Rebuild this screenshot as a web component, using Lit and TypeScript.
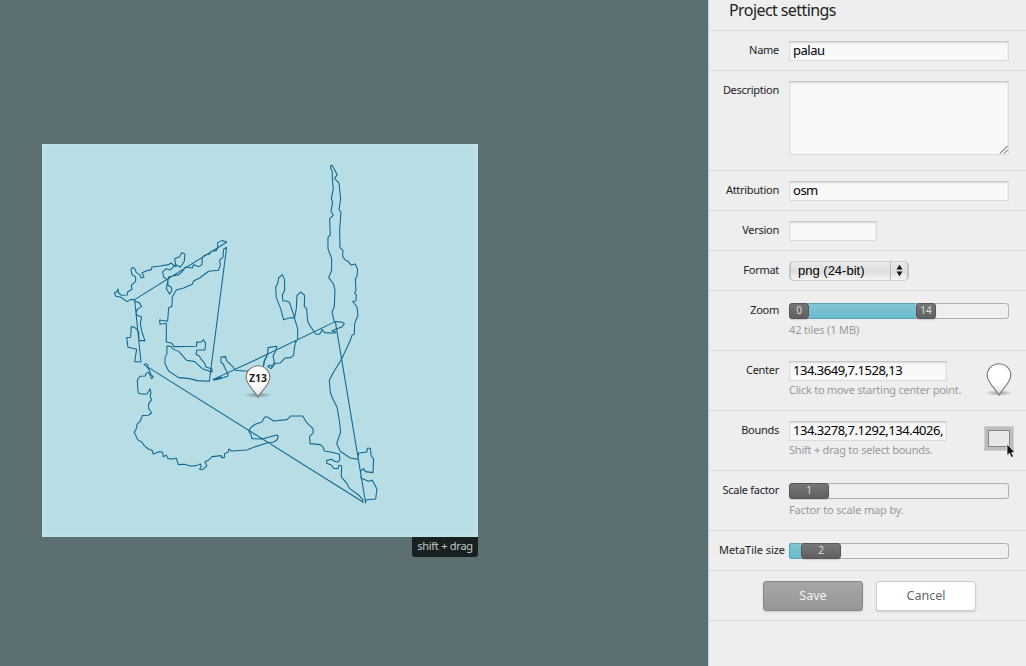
import { LitElement, html, svg, css, nothing } from "lit";
import { customElement, property } from "lit/decorators.js";

const pin = (label: string) => svg`
  <defs>
    <linearGradient id="pinfill" x1="0" y1="0" x2="0" y2="1">
      <stop offset="0" stop-color="#fff"/><stop offset=".6" stop-color="#fff"/><stop offset="1" stop-color="#ddd"/>
    </linearGradient>
    <radialGradient id="pinshade"><stop offset="0" stop-color="#000" stop-opacity=".35"/><stop offset="1" stop-color="#000" stop-opacity="0"/></radialGradient>
  </defs>
  <ellipse cx="14" cy="30" rx="14" ry="3" fill="url(#pinshade)"/>
  <path d="M14 32 C12 27.500 2.200 20 2.200 12.300 A11.800 11.500 0 0 1 25.800 12.300 C25.800 20 16 27.500 14 32Z"
    fill="url(#pinfill)" stroke="#777" stroke-width="1.100"/>
  ${label
    ? svg`<text x="14" y="17" text-anchor="middle" textLength="18" lengthAdjust="spacingAndGlyphs" font-family="Noto Sans, Open Sans, sans-serif" font-weight="700" font-size="11" fill="#222">${label}</text>`
    : nothing}`;

const coast: { x: number; y: number; d: string }[] = [
  {
    x: 100, y: 225,
    d: `M380,50 365,46 352,52 352,68 348,76 333,78 328,86 312,90 306,98 305,118 296,124 280,118 276,128 255,125 245,140 235,148 218,152 205,155 203,165 200,180 198,190 208,206 215,196 213,186 203,180 203,165 190,155 187,140 198,130 210,134 222,122 212,113 205,118 180,122 155,125 153,133 137,137 125,143 131,155 122,158 118,148 108,142 105,132 98,126 92,132 95,148 106,155 106,168 93,180 95,192 82,200 81,209 64,210 55,203 53,191 49,200 42,203 47,213 62,216 80,229 90,223 103,223 L380,50
    M212,113 L227,124 223,100 238,94 244,82 254,86 252,108 240,126 227,118
    M379,66 L370,72 368,96 358,104 360,120 354,135 325,138 298,158 280,167 276,177 250,188 228,194 216,215 215,243 205,248 202,288 178,284 179,297 198,294 198,350 215,354 221,364 289,363 289,350 301,351 310,343 313,350 316,352 314,374 290,374 287,387 297,392 304,404 312,412 317,425 335,431 335,440 306,430 283,409 259,405 236,379 216,370 213,363 200,362 200,385 194,397 194,415 205,437 235,457 268,460 290,466 327,468Z
    M103,223 L122,410 103,409 109,372 83,366 79,337 91,336 93,304 103,306 115,318 116,346 134,346 125,320 120,295 124,275 110,270 107,260 113,250 124,244 117,232 103,228`,
  },
  {
    x: 120, y: 350,
    d: `M728,455 L85,52 71,43 76,40 83,43 80,50 85,56 92,72 99,80 94,85 88,72 84,66 77,70 75,77 59,78 51,90 52,110 54,128 63,131 80,131 86,122 89,115 92,128 89,137 94,148 85,160 85,174 94,188 84,195 66,196 60,212 50,222 49,233 42,246 52,268 65,276 72,286 84,296 95,300 99,311 117,304 127,306 129,319 138,315 143,325 160,326 168,323 174,343 192,342 210,347 228,346 240,341 243,348 238,357 247,358 260,347 254,335 265,329 275,319 303,316 304,322 312,322 313,310 324,305 326,296 334,302 380,299 400,291 440,278 460,275 470,269 474,258 470,254 455,258 425,266 395,265 392,252 385,243
    M280,90 L300,85 323,77 323,70 312,50 310,42 302,36 302,20 316,19 318,30 338,50 345,60 372,62 412,62 428,54 432,32 440,18`,
  },
  {
    x: 240, y: 380,
    d: `M25,152 L33,140 45,132 65,125 73,110 82,110 100,122 140,118 152,107 187,107 200,128 218,145 219,158 208,168 209,190 240,193 248,200 252,212 270,215 297,221 299,238 293,245 283,243 273,237 259,241 259,249 273,254 280,264 293,265 296,255 304,257 303,290 320,310 328,325 356,345 367,357 368,368
    M300,213 L330,233 352,237 355,218 380,215 381,204 390,204 393,228 400,235 398,277 375,274 370,265 361,272 362,293 385,303 396,300 410,326 406,356 376,359 L376,368 285,-177`,
  },
  {
    x: 255, y: 260,
    d: `M-128,358 L0,299 240,184 262,186 267,190 260,200 242,206 230,212 242,215 238,219 208,217 200,207 198,215 192,222 182,222 165,198 157,183 154,145 147,138 148,105 136,95 125,106 123,145 118,172 102,126 93,122 83,122 81,105 88,90 88,58 81,43 70,53 67,70 61,80 63,112 76,145 85,178 100,173 117,172 127,205 127,235 120,250 117,265 115,285 106,292 90,293 75,308 60,309 47,325 37,318 46,314 51,321 57,305 53,287 60,275 65,258 38,262 37,282 28,300 25,315
    M-128,358 L-100,350`,
  },
  {
    x: 310, y: 150,
    d: `M72,84 L81,74 66,46 61,46 61,54 66,65 66,85 69,115 63,145 67,155 62,183 69,195 58,205 60,253 53,262 53,295 64,325 64,360 55,382 70,402 74,420 72,470 65,485 72,515
    M72,84 L86,98 91,145 86,178 92,186 88,240 89,292 98,300 97,318 105,330 112,332 122,344 135,341 142,358 140,377 135,387 137,420 133,429 138,434 137,452 127,453 140,470 143,495 133,520 132,552 125,555 120,570 110,592 92,630 70,665 57,690 60,725 65,740 80,770 87,810 91,845 79,880 90,903`,
  },
];

@customElement("value-slider")
class ValueSlider extends LitElement {
  @property({ type: Number }) fill = 0;
  @property({ type: Number }) handle = 20;
  @property() low = "";
  @property() value = "";
  static styles = css`
    :host { display: block; width: 220px; height: 16px; }
    .track { display: flex; box-sizing: border-box; height: 16px; border: 1px solid #b0b0b0; border-radius: 3px; background: #efefef; }
    .bar { box-sizing: border-box; height: 16px; margin-top: -1px; border: solid #5aa2b3; border-width: 1px 0; background: linear-gradient(#82c5d4, #68bbcf); }
    .bar.first { margin-left: -1px; border-left-width: 1px; border-radius: 3px 0 0 3px; }
    .knob { box-sizing: border-box; height: 16px; margin-top: -1px; border: 1px solid #565656; border-radius: 3px; background: linear-gradient(#777, #606060); color: #ddd; font: 10px/13px "Noto Sans", "Open Sans", sans-serif; text-align: center; box-shadow: 0 1px 1px #0002; }
    .knob.first { margin-left: -1px; }
  `;
  render() {
    return html`<div class="track">
      ${this.low ? html`<div class="knob first" style="width:${this.handle}px">${this.low}</div>` : nothing}
      ${this.fill ? html`<div class="bar ${this.low ? "" : "first"}" style="width:${this.fill}px"></div>` : nothing}
      <div class="knob ${this.low || this.fill ? "" : "first"}" style="width:${this.handle}px">${this.value}</div>
    </div>`;
  }
}

@customElement("app-root")
class AppRoot extends LitElement {
  static styles = css`
    :host { display: flex; width: 1026px; height: 666px; overflow: hidden; background: #5c6f72; font-family: "Noto Sans", "Open Sans", sans-serif; }
    .stage { width: 708px; box-sizing: border-box; padding: 144px 0 0 42px; }
    .map { position: relative; width: 436px; height: 393px; background: #b7dee5; box-shadow: inset 0 0 10px #c3e6ee; }
    .map > svg { display: block; }
    .marker { position: absolute; left: 202px; top: 221px; }
    .tip { box-sizing: border-box; width: 66px; height: 20px; margin-left: 370px; background: #192021; color: #c4c8c8; border-radius: 0 0 3px 3px; font-size: 11px; line-height: 18px; text-align: center; white-space: nowrap; letter-spacing: -0.25px; }
    .panel { width: 318px; box-sizing: border-box; border-left: 1px solid #ccc; background: #eee; color: #333; }
    h1 { box-sizing: border-box; height: 31px; margin: 0; padding-left: 20px; border-bottom: 1px solid #dcdcdc; font-size: 16px; font-weight: 400; line-height: 21px; letter-spacing: -0.58px; color: #222; }
    .row { display: flex; align-items: flex-start; box-sizing: border-box; height: 40px; border-bottom: 1px solid #dcdcdc; padding-top: 10px; }
    .row.mid { height: 60px; }
    .row.tall { height: 100px; }
    label { width: 70px; margin-right: 10px; text-align: right; font-size: 11px; line-height: 17px; letter-spacing: -0.28px; white-space: nowrap; color: #222; }
    label.wide { width: 76px; margin-right: 4px; letter-spacing: -0.05px; }
    .field { width: 220px; }
    .slide { padding-top: 2px; }
    input, textarea { display: block; box-sizing: border-box; width: 220px; height: 20px; margin: 0; border: 1px solid #dcdcdc; border-top-color: #c8c8c8; border-radius: 0; outline: 0; background: #f8f8f8; box-shadow: inset 0 1px 2px #0002; padding: 0 3px 2px; font: 13px/16px "Noto Sans", "Open Sans", sans-serif; letter-spacing: -0.49px; color: #000; resize: none; }
    .w158 { width: 158px; }
    .w88 { width: 88px; }
    .area { display: grid; }
    .area > * { grid-area: 1 / 1; }
    textarea { height: 74px; }
    .grip { align-self: end; justify-self: end; margin: 0 1px 1px 0; }
    .hint { font-size: 11px; line-height: 17px; color: #999; white-space: nowrap; letter-spacing: -0.23px; }
    .hint.s { padding-top: 2px; letter-spacing: -0.15px; }
    .select { display: flex; box-sizing: border-box; width: 120px; height: 20px; border: 1px solid #d0d0d0; border-left: 2px solid #c4c4c4; border-right: 2px solid #c4c4c4; border-radius: 5px; background: linear-gradient(#eaeaea, #dedede 50%, #f5f5f5); color: #000; }
    .choice { width: 92px; padding-left: 7px; font: 13px/18px "Liberation Sans", sans-serif; box-sizing: content-box; border-right: 1px solid #bbb; letter-spacing: 0; }
    .arrows { margin: 2px 0 0 5px; flex: none; }
    .tool { margin: 2px 0 0 -24px; flex: none; }
    .box { position: relative; box-sizing: border-box; width: 30px; height: 25px; margin: 5px 0 0 -25px; flex: none; background: #bdbdbd; border: 1px solid #d0d0d0; padding: 3px; }
    .box i { display: block; box-sizing: border-box; width: 22px; height: 17px; border: 1px solid #858585; background: #e8e8e8; }
    .cursor { position: absolute; left: 21px; top: 16px; }
    .actions { display: flex; box-sizing: border-box; height: 50px; padding: 10px 0 0 54px; gap: 13px; border-bottom: 1px solid #dcdcdc; }
    button { box-sizing: border-box; width: 100px; height: 30px; margin: 0; padding: 0 0 1px; border: 1px solid #ccc; border-radius: 3px; background: #fff; color: #666; font: 12.500px "Noto Sans", "Open Sans", sans-serif; box-shadow: 0 1px 2px #0002; }
    .save { border-color: #888; background: linear-gradient(#a7a7a7, #969696); color: #f4f4f4; }
  `;
  render() {
    return html`
      <div class="stage">
        <div class="map">
          <svg width="436" height="393" viewBox="42 144 436 393">
            ${coast.map((c) => svg`<path transform="translate(${c.x + 0.3} ${c.y + 0.3}) scale(.33333)" d=${c.d} fill="none" stroke="#12668f" stroke-width="3.200" stroke-linejoin="round"/>`)}
          </svg>
          <svg class="marker" width="28" height="34">${pin("Z13")}</svg>
        </div>
        <div class="tip">shift + drag</div>
      </div>
      <div class="panel">
        <h1>Project settings</h1>
        <div class="row"><label>Name</label><input value="palau" /></div>
        <div class="row tall"><label>Description</label>
          <div class="area"><textarea></textarea>
            <svg class="grip" width="9" height="9"><path d="M1 8.500 8.500 1M5 8.500 8.500 5" stroke="#444" fill="none"/></svg>
          </div>
        </div>
        <div class="row"><label>Attribution</label><input value="osm" /></div>
        <div class="row"><label>Version</label><input class="w88" /></div>
        <div class="row"><label>Format</label>
          <div class="select"><span class="choice">png (24-bit)</span>
            <svg class="arrows" width="7" height="13"><path d="M.5 5.500 3.500 .8 6.500 5.500ZM.5 7.500 3.500 12.200 6.500 7.500Z" fill="#111"/></svg>
          </div>
        </div>
        <div class="row mid"><label>Zoom</label>
          <div class="field slide"><value-slider low="0" .fill=${107} value="14"></value-slider><div class="hint s">42 tiles (1 MB)</div></div>
        </div>
        <div class="row mid"><label>Center</label>
          <div class="field"><input class="w158" value="134.3649,7.1528,13" /><div class="hint">Click to move starting center point.</div></div>
          <svg class="tool" width="28" height="34">${pin("")}</svg>
        </div>
        <div class="row mid"><label>Bounds</label>
          <div class="field"><input class="w158" value="134.3278,7.1292,134.4026," /><div class="hint">Shift + drag to select bounds.</div></div>
          <div class="box"><i></i>
            <svg class="cursor" width="10" height="16"><path d="M1 1V12.500L3.500 10.200 5.500 14.500 7.500 13.600 5.600 9.500H9Z" fill="#111" stroke="#fff" stroke-width=".7"/></svg>
          </div>
        </div>
        <div class="row mid"><label>Scale factor</label>
          <div class="field slide"><value-slider .handle=${40} value="1"></value-slider><div class="hint s">Factor to scale map by.</div></div>
        </div>
        <div class="row"><label class="wide">MetaTile size</label>
          <div class="field slide"><value-slider .fill=${12} .handle=${40} value="2"></value-slider></div>
        </div>
        <div class="actions"><button class="save">Save</button><button>Cancel</button></div>
      </div>`;
  }
}
